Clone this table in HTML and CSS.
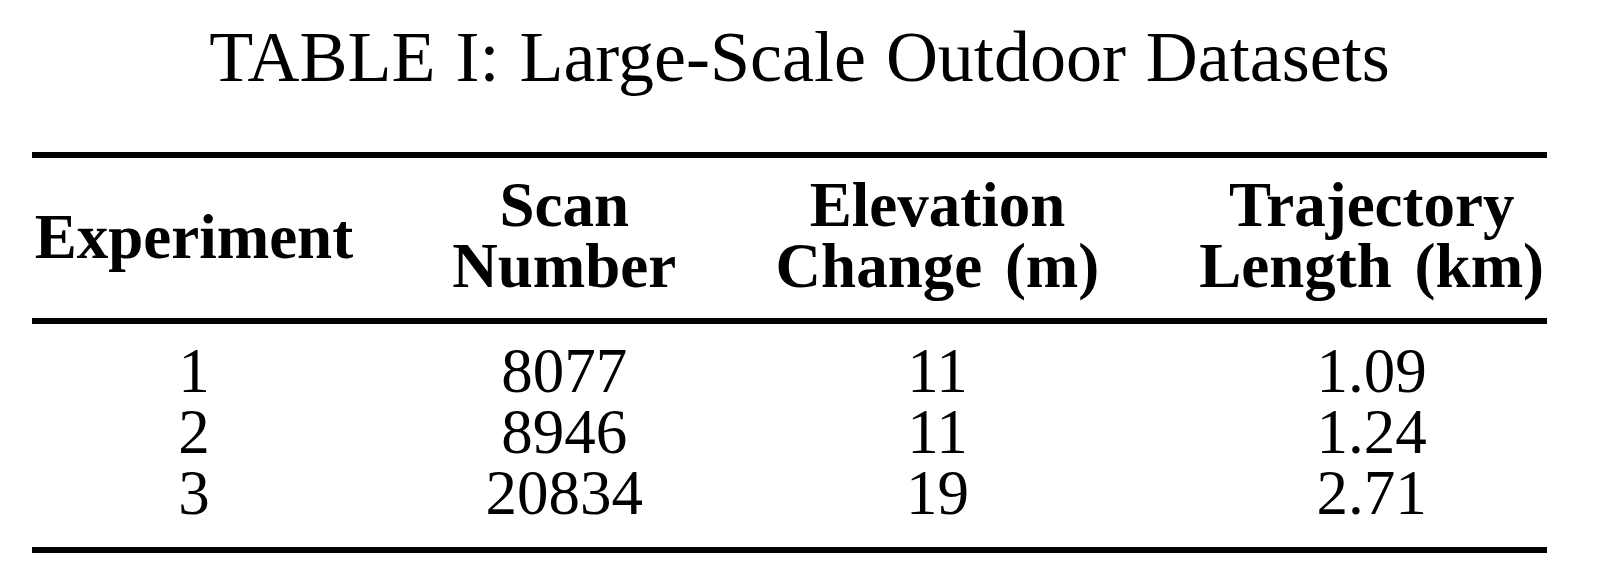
FILE: index.html
```html
<!DOCTYPE html>
<html lang="en">
<head>
<meta charset="utf-8">
<title>TABLE I: Large-Scale Outdoor Datasets</title>
<link rel="stylesheet" href="styles.css">
</head>
<body>
<main class="page">
  <h1 class="caption">TABLE I: Large-Scale Outdoor Datasets</h1>
  <table class="data-table">
    <thead>
      <tr>
        <th class="single">Experiment</th>
        <th>Scan<br>Number</th>
        <th>Elevation<br>Change (m)</th>
        <th>Trajectory<br>Length (km)</th>
      </tr>
    </thead>
    <tbody>
      <tr><td>1</td><td>8077</td><td>11</td><td>1.09</td></tr>
      <tr><td>2</td><td>8946</td><td>11</td><td>1.24</td></tr>
      <tr><td>3</td><td>20834</td><td>19</td><td>2.71</td></tr>
    </tbody>
  </table>
</main>
</body>
</html>
```
FILE: styles.css
```css
html, body {
  margin: 0;
  padding: 0;
  background: #ffffff;
}

body {
  font-family: "Liberation Serif", "Times New Roman", serif;
  color: #000000;
}

.page {
  padding-top: 21px;
}

.caption {
  margin: 0 0 59px 0;
  font-size: 72px;
  line-height: 72px;
  font-weight: normal;
  text-align: center;
  word-spacing: 2px;
}

.data-table {
  margin-left: 32px;
  width: 1515px;
  table-layout: auto;
  border-collapse: separate;
  border-spacing: 0;
  font-size: 63px;
}

.data-table th,
.data-table td {
  padding: 0 47px;
  text-align: center;
  white-space: nowrap;
}

.data-table th:first-child,
.data-table td:first-child {
  padding-left: 0;
}

.data-table th:last-child,
.data-table td:last-child {
  padding-right: 0;
}

.data-table th {
  font-weight: bold;
  line-height: 60.5px;
  word-spacing: 7px;
  padding-top: 17px;
  padding-bottom: 22px;
  border-top: 6px solid #000;
  border-bottom: 6px solid #000;
  vertical-align: middle;
}

.data-table th.single {
  padding-top: 19px;
  padding-bottom: 20px;
}

.data-table td {
  line-height: 61px;
}

.data-table tbody tr:first-child td {
  padding-top: 17px;
}

.data-table tbody tr:last-child td {
  padding-bottom: 23px;
  border-bottom: 6px solid #000;
}
```
